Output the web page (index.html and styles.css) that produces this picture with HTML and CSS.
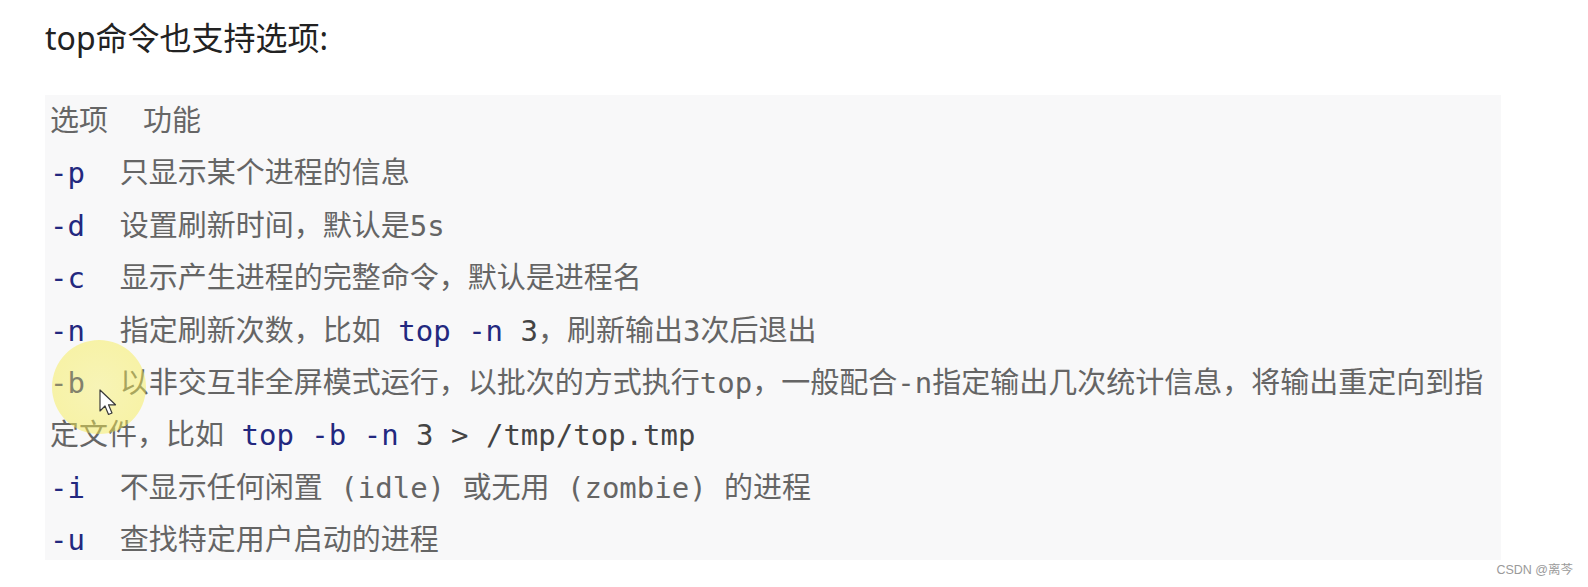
FILE: index.html
```html
<!DOCTYPE html>
<html lang="zh-CN">
<head>
<meta charset="utf-8">
<title>top命令选项</title>
<link rel="stylesheet" href="styles.css">
</head>
<body>
<div class="page">
  <h2 class="title">top命令也支持选项:</h2>
  <div class="code-box">
<pre class="code"><span class="hd">选项  功能</span>
<span class="opt">-p</span>  只显示某个进程的信息
<span class="opt">-d</span>  设置刷新时间，默认是5s
<span class="opt">-c</span>  显示产生进程的完整命令，默认是进程名
<span class="opt">-n</span>  指定刷新次数，比如 <span class="cmd">top -n</span> <span class="num">3</span>，刷新输出3次后退出
<span class="opt">-b</span>  以非交互非全屏模式运行，以批次的方式执行top，一般配合-n指定输出几次统计信息，将输出重定向到指定文件，比如 <span class="cmd">top -b -n</span> <span class="num">3 &gt; /tmp/top.tmp</span>
<span class="opt">-i</span>  不显示任何闲置 (idle) 或无用 (zombie) 的进程
<span class="opt">-u</span>  查找特定用户启动的进程</pre>
  </div>
  <div class="watermark">CSDN @离芩</div>
  <div class="pointer-halo"></div>
  <svg class="cursor" width="20" height="30" viewBox="0 0 20 30" aria-hidden="true">
    <path d="M1 1 L1 22 L6 17 L9.5 25.5 L13 24 L9.5 15.8 L16.5 15.8 Z" fill="#ffffff" stroke="#3a3a3a" stroke-width="1.2" stroke-linejoin="round"/>
  </svg>
</div>
</body>
</html>
```

FILE: styles.css
```css
html, body {
  margin: 0;
  padding: 0;
  background: #ffffff;
}

.page {
  position: relative;
  width: 1588px;
  height: 587px;
  overflow: hidden;
}

.title {
  margin: 18px 0 0 45px;
  height: 40px;
  line-height: 40px;
  font-family: "Noto Sans", "Noto Sans CJK SC", sans-serif;
  font-size: 32px;
  font-weight: 400;
  color: #222222;
}

.code-box {
  margin: 37px 0 0 45px;
  width: 1451px;
  height: 465px;
  padding: 0 0 0 5px;
  background: #f8f8f9;
}

.code {
  margin: 0;
  font-family: "DejaVu Sans Mono", "Noto Sans CJK SC", monospace;
  font-size: 29px;
  line-height: 52.4px;
  color: #656565;
  white-space: pre-wrap;
  word-break: normal;
}

.hd {
  color: #666666;
}

.opt,
.cmd {
  color: #23287f;
}

.num {
  color: #444444;
}

.watermark {
  margin: 3px 15px 0 0;
  text-align: right;
  font-family: "Liberation Sans", "Noto Sans CJK SC", sans-serif;
  font-size: 12.5px;
  line-height: 14px;
  color: #9a9a9a;
}

.pointer-halo {
  position: absolute;
  left: 52px;
  top: 340px;
  width: 94px;
  height: 94px;
  border-radius: 50%;
  background: radial-gradient(circle, rgba(246, 238, 90, 0.42) 0%, rgba(246, 236, 80, 0.5) 82%, rgba(246, 236, 80, 0) 100%);
}

.cursor {
  position: absolute;
  left: 99px;
  top: 389px;
}
```
